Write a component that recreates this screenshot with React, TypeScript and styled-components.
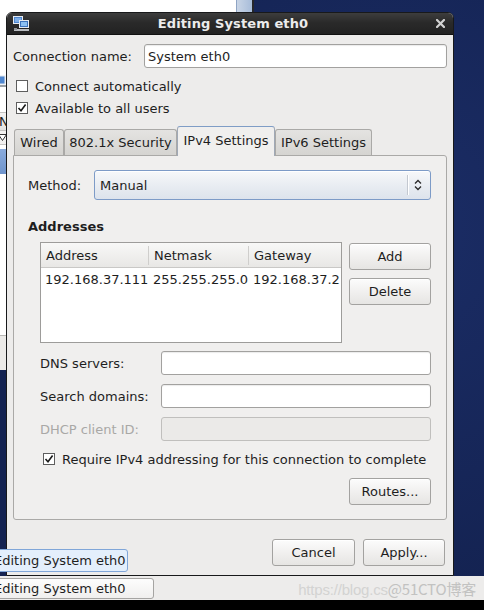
import React from "react";
import styled, { createGlobalStyle } from "styled-components";

const GlobalStyle = createGlobalStyle`
  html, body {
    margin: 0;
    padding: 0;
    width: 484px;
    height: 610px;
    overflow: hidden;
  }
  body {
    font-family: "DejaVu Sans", "Noto Sans", sans-serif;
    font-size: 13px;
    color: #1e1e1e;
  }
`;

const Screen = styled.div`
  width: 484px;
  height: 610px;
  display: flex;
  flex-direction: column;
`;

const Desktop = styled.div`
  position: relative;
  height: 576px;
  flex: none;
  overflow: hidden;
  background: radial-gradient(circle at 80% 40%, #1b2d66 0%, #142352 70%);
`;

/* window behind the dialog */
const BackWindow = styled.div`
  position: absolute;
  left: -40px;
  top: -10px;
  width: 294px;
  height: 380px;
  display: flex;
  background: #ffffff;
  border-right: 2px solid #26272b;
  box-sizing: border-box;
`;

const BackContent = styled.div`
  flex: 1;
  display: flex;
  flex-direction: column;
`;

const BackRow = styled.div<{ $h: number; $bg?: string; $line?: boolean }>`
  height: ${(p) => p.$h}px;
  flex: none;
  display: flex;
  align-items: center;
  padding-left: 39px;
  background: ${(p) => p.$bg || "#ffffff"};
  border-bottom: ${(p) => (p.$line ? "1px solid #c4c3c1" : "none")};
  box-sizing: border-box;
  font-size: 13px;
  color: #222;
`;

const BackFill = styled.div`
  flex: 1;
  background: #ffffff;
`;

const BackScroll = styled.div`
  width: 15px;
  background: linear-gradient(90deg, #c9d5e6, #a7bcd9);
  border-left: 1px solid #8ea4c4;
`;

/* dialog */
const Dialog = styled.div`
  position: absolute;
  left: 6px;
  top: 12px;
  width: 448px;
  height: 564px;
  box-sizing: border-box;
  border: 1px solid #18191b;
  border-radius: 6px 6px 0 0;
  background: #edeceb;
  display: flex;
  flex-direction: column;
  overflow: hidden;
`;

const TitleBar = styled.div`
  height: 21px;
  flex: none;
  display: flex;
  align-items: center;
  padding: 0 8px 0 6px;
  background: linear-gradient(#3d3d3d, #2a2a2a 45%, #222222);
  border-bottom: 1px solid #111;
`;

const TitleText = styled.div`
  flex: 1;
  text-align: center;
  font-weight: bold;
  color: #ececec;
  font-size: 13px;
  letter-spacing: 0.1px;
`;

const Body = styled.div`
  flex: 1;
  display: flex;
  flex-direction: column;
  padding: 9px 6px 0 6px;
`;

const NameRow = styled.div`
  display: flex;
  align-items: center;
  height: 24px;
`;

const Label = styled.div<{ $w?: number; $disabled?: boolean }>`
  width: ${(p) => (p.$w ? `${p.$w}px` : "auto")};
  flex: none;
  color: ${(p) => (p.$disabled ? "#a9a8a6" : "#1e1e1e")};
  white-space: nowrap;
`;

const Entry = styled.div<{ $disabled?: boolean }>`
  flex: 1;
  height: 24px;
  box-sizing: border-box;
  display: flex;
  align-items: center;
  padding-left: 3px;
  border: 1px solid ${(p) => (p.$disabled ? "#c0bfbd" : "#a2a19f")};
  border-radius: 3px;
  background: ${(p) => (p.$disabled ? "#ebeae8" : "#ffffff")};
  box-shadow: ${(p) => (p.$disabled ? "none" : "inset 0 1px 1px rgba(0,0,0,0.08)")};
`;

const CheckRow = styled.div<{ $indent: number; $top?: number }>`
  display: flex;
  align-items: center;
  gap: 7px;
  height: ${(p) => (p.$top !== undefined ? 24 : 22)}px;
  padding-left: ${(p) => p.$indent}px;
  margin-top: ${(p) => p.$top || 0}px;
`;

const Box = styled.div`
  width: 12px;
  height: 12px;
  box-sizing: border-box;
  border: 1px solid #5e5e5e;
  background: #ffffff;
  display: flex;
  align-items: center;
  justify-content: center;
`;

const Checks = styled.div`
  margin-top: 7px;
  display: flex;
  flex-direction: column;
`;

const TabStrip = styled.div`
  margin-top: 7px;
  height: 29px;
  display: flex;
  align-items: flex-end;
  padding-left: 1px;
  position: relative;
  z-index: 1;
`;

const Tab = styled.div<{ $active?: boolean; $w: number }>`
  width: ${(p) => p.$w}px;
  height: ${(p) => (p.$active ? 30 : 26)}px;
  margin-bottom: ${(p) => (p.$active ? -1 : 0)}px;
  box-sizing: border-box;
  display: flex;
  align-items: center;
  justify-content: center;
  padding-bottom: ${(p) => (p.$active ? 2 : 0)}px;
  border: 1px solid ${(p) => (p.$active ? "#a0a9b6" : "#aaa9a7")};
  border-top-color: ${(p) => (p.$active ? "#7f9dc6" : "#aaa9a7")};
  border-bottom: none;
  border-radius: 3px 3px 0 0;
  background: ${(p) =>
    p.$active ? "#f0efee" : "linear-gradient(#e4e3e1, #d5d4d1)"};
  color: #1e1e1e;
  white-space: nowrap;
`;

const Panel = styled.div`
  height: 365px;
  box-sizing: border-box;
  border: 1px solid #aaa9a7;
  border-radius: 0 3px 3px 3px;
  background: #f0efee;
  padding: 14px 15px 0 14px;
  display: flex;
  flex-direction: column;
`;

const MethodRow = styled.div`
  display: flex;
  align-items: center;
  height: 30px;
`;

const Combo = styled.div`
  flex: 1;
  height: 30px;
  box-sizing: border-box;
  display: flex;
  align-items: center;
  padding-left: 5px;
  border: 1px solid #7d9bc7;
  border-radius: 3px;
  background: linear-gradient(#f7f8fa, #e9edf2 50%, #dde3ec);
  box-shadow: inset 0 1px 0 #ffffff;
`;

const ComboText = styled.div`
  flex: 1;
`;

const ComboSep = styled.div`
  width: 1px;
  height: 20px;
  background: #c3c8d0;
  box-shadow: 1px 0 0 #ffffff;
  margin-right: 6px;
`;

const ArrowSlot = styled.div`
  width: 16px;
  display: flex;
`;

const Heading = styled.div`
  margin-top: 19px;
  height: 16px;
  line-height: 16px;
  font-weight: bold;
`;

const AddressBlock = styled.div`
  margin-top: 7px;
  padding-left: 12px;
  display: flex;
  gap: 7px;
`;

const Tree = styled.div`
  width: 302px;
  height: 101px;
  box-sizing: border-box;
  border: 1px solid #9d9c9a;
  background: #ffffff;
  display: flex;
  flex-direction: column;
`;

const TreeHeader = styled.div`
  height: 25px;
  box-sizing: border-box;
  display: flex;
  align-items: center;
  background: linear-gradient(#f8f8f7, #e8e7e5);
  border-bottom: 1px solid #c9c8c6;
`;

const Cell = styled.div<{ $w?: number; $pad: number }>`
  width: ${(p) => (p.$w ? `${p.$w}px` : "auto")};
  flex: ${(p) => (p.$w ? "none" : "1")};
  padding-left: ${(p) => p.$pad}px;
  box-sizing: border-box;
  white-space: nowrap;
  overflow: hidden;
`;

const HeadSep = styled.div`
  width: 1px;
  height: 19px;
  background: #cfcecc;
  flex: none;
`;

const TreeRow = styled.div`
  height: 23px;
  display: flex;
  align-items: center;
`;

const ButtonColumn = styled.div`
  width: 82px;
  display: flex;
  flex-direction: column;
  gap: 8px;
  padding-top: 1px;
`;

const Button = styled.button<{ $w?: number }>`
  width: ${(p) => (p.$w ? `${p.$w}px` : "100%")};
  height: 27px;
  flex: none;
  padding: 0;
  font: inherit;
  color: #1e1e1e;
  border: 1px solid #a3a2a0;
  border-radius: 3px;
  background: linear-gradient(#fcfcfc, #f1f0ef 50%, #e6e5e3);
  box-shadow: inset 0 1px 0 #ffffff;
`;

const FieldGrid = styled.div`
  margin-top: 8px;
  padding-left: 12px;
  display: grid;
  grid-template-columns: 121px 1fr;
  grid-auto-rows: 24px;
  row-gap: 9px;
  align-items: center;
`;

const RoutesRow = styled.div`
  margin-top: 7px;
  display: flex;
  justify-content: flex-end;
`;

const ActionRow = styled.div`
  margin-top: 19px;
  padding-right: 2px;
  display: flex;
  justify-content: flex-end;
  gap: 8px;
`;

/* tooltip and taskbar */
const Tooltip = styled.div`
  position: absolute;
  left: -16px;
  top: 549px;
  width: 144px;
  height: 23px;
  box-sizing: border-box;
  display: flex;
  align-items: center;
  padding-left: 9px;
  border: 1px solid #80a6d8;
  border-radius: 3px;
  background: #e4effc;
  white-space: nowrap;
`;

const Taskbar = styled.div`
  height: 24px;
  flex: none;
  display: flex;
  align-items: center;
  justify-content: space-between;
  background: #edeceb;
  overflow: hidden;
`;

const TaskButton = styled.div`
  margin-left: -16px;
  width: 170px;
  height: 21px;
  box-sizing: border-box;
  display: flex;
  align-items: center;
  padding-left: 9px;
  border: 1px solid #a5a4a2;
  border-radius: 3px;
  background: linear-gradient(#fdfdfd, #f0efee);
  white-space: nowrap;
`;

const Watermark = styled.div`
  margin-right: 8px;
  font-family: "Liberation Sans", "Noto Sans CJK SC", sans-serif;
  font-size: 15px;
  color: #d3d3d2;
  white-space: nowrap;
  letter-spacing: -0.2px;
`;

const WatermarkTag = styled.span`
  color: #c2c2c1;
  font-family: "Noto Sans CJK SC", sans-serif;
`;

const BottomStrip = styled.div`
  height: 10px;
  flex: none;
  background: #000000;
`;

const CheckBox = ({ checked }: { checked?: boolean }) => (
  <Box>
    {checked && (
      <svg width="10" height="10" viewBox="0 0 10 10">
        <path d="M1.5 5 L4 7.8 L8.6 1.6" fill="none" stroke="#1a1a1a" strokeWidth="1.6" />
      </svg>
    )}
  </Box>
);

const NetworkIcon = () => (
  <svg width="17" height="16" viewBox="0 0 17 16">
    <rect x="0.5" y="0.5" width="9" height="7" fill="#4f86cf" stroke="#e6ebf2" />
    <rect x="2" y="2" width="6" height="4" fill="#7fb0ea" />
    <rect x="6.5" y="4.5" width="9" height="7" fill="#3d73bd" stroke="#e6ebf2" />
    <rect x="8" y="6" width="6" height="4" fill="#8cc0f2" />
    <rect x="1" y="13" width="15" height="2" fill="#b9bcc0" />
    <rect x="1" y="12" width="3" height="2" fill="#8d9196" />
  </svg>
);

const CloseIcon = () => (
  <svg width="9" height="9" viewBox="0 0 9 9">
    <path d="M1 1 L8 8 M8 1 L1 8" stroke="#d2d2d2" strokeWidth="2.2" strokeLinecap="square" />
  </svg>
);

const UpDown = () => (
  <svg width="8" height="12" viewBox="0 0 8 12">
    <path d="M1 4.5 L4 1.5 L7 4.5 M1 7.5 L4 10.5 L7 7.5" fill="none" stroke="#2a2a2a" strokeWidth="1.3" />
  </svg>
);

const Triangle = () => (
  <svg width="9" height="7" viewBox="0 0 9 7">
    <path d="M0.5 0.5 L8.5 0.5 L4.5 6.5 Z" fill="#ffffff" stroke="#333" />
  </svg>
);

const SmallIcon = () => (
  <svg width="14" height="14" viewBox="0 0 14 14">
    <rect x="1" y="1" width="10" height="8" fill="#4f86cf" stroke="#dfe6ee" />
    <rect x="1" y="10" width="12" height="2" fill="#9aa0a6" />
  </svg>
);

export default function App() {
  return (
    <Screen>
      <GlobalStyle />
      <Desktop>
        <BackWindow>
          <BackContent>
            <BackRow $h={84} />
            <BackRow $h={16} style={{ paddingLeft: 34 }}>
              <SmallIcon />
            </BackRow>
            <BackRow $h={23} $bg="#ffffff" $line />
            <BackRow $h={18} $bg="linear-gradient(#f4f3f2,#e4e3e1)" $line>
              N
            </BackRow>
            <BackRow $h={14} $bg="#f2f1f0" $line style={{ paddingLeft: 38 }}>
              <Triangle />
            </BackRow>
            <BackRow $h={4} />
            <BackRow $h={25} $bg="linear-gradient(#8aabdc,#6f94cc)" />
            <BackFill />
            <BackRow $h={35} $bg="#ebeae8" style={{ borderTop: "1px solid #b8b7b5" }} />
          </BackContent>
          <BackScroll />
        </BackWindow>

        <Dialog>
          <TitleBar>
            <NetworkIcon />
            <TitleText>Editing System eth0</TitleText>
            <CloseIcon />
          </TitleBar>
          <Body>
            <NameRow>
              <Label $w={131}>Connection name:</Label>
              <Entry>System eth0</Entry>
            </NameRow>
            <Checks>
              <CheckRow $indent={3}>
                <CheckBox />
                Connect automatically
              </CheckRow>
              <CheckRow $indent={3}>
                <CheckBox checked />
                Available to all users
              </CheckRow>
            </Checks>

            <TabStrip>
              <Tab $w={50}>Wired</Tab>
              <Tab $w={113}>802.1x Security</Tab>
              <Tab $w={98} $active>
                IPv4 Settings
              </Tab>
              <Tab $w={97}>IPv6 Settings</Tab>
            </TabStrip>
            <Panel>
              <MethodRow>
                <Label $w={66}>Method:</Label>
                <Combo>
                  <ComboText>Manual</ComboText>
                  <ComboSep />
                  <ArrowSlot>
                    <UpDown />
                  </ArrowSlot>
                </Combo>
              </MethodRow>

              <Heading>Addresses</Heading>
              <AddressBlock>
                <Tree>
                  <TreeHeader>
                    <Cell $w={107} $pad={5}>Address</Cell>
                    <HeadSep />
                    <Cell $w={99} $pad={5}>Netmask</Cell>
                    <HeadSep />
                    <Cell $pad={5}>Gateway</Cell>
                  </TreeHeader>
                  <TreeRow>
                    <Cell $w={108} $pad={4}>192.168.37.111</Cell>
                    <Cell $w={100} $pad={4}>255.255.255.0</Cell>
                    <Cell $pad={4}>192.168.37.2</Cell>
                  </TreeRow>
                </Tree>
                <ButtonColumn>
                  <Button>Add</Button>
                  <Button>Delete</Button>
                </ButtonColumn>
              </AddressBlock>

              <FieldGrid>
                <Label>DNS servers:</Label>
                <Entry />
                <Label>Search domains:</Label>
                <Entry />
                <Label $disabled>DHCP client ID:</Label>
                <Entry $disabled />
              </FieldGrid>

              <CheckRow $indent={15} $top={6}>
                <CheckBox checked />
                Require IPv4 addressing for this connection to complete
              </CheckRow>

              <RoutesRow>
                <Button $w={82}>Routes...</Button>
              </RoutesRow>
            </Panel>

            <ActionRow>
              <Button $w={83}>Cancel</Button>
              <Button $w={82}>Apply...</Button>
            </ActionRow>
          </Body>
        </Dialog>

        <Tooltip>Editing System eth0</Tooltip>
      </Desktop>
      <Taskbar>
        <TaskButton>Editing System eth0</TaskButton>
        <Watermark>
          https://blog.cs<WatermarkTag>@51CTO博客</WatermarkTag>
        </Watermark>
      </Taskbar>
      <BottomStrip />
    </Screen>
  );
}
